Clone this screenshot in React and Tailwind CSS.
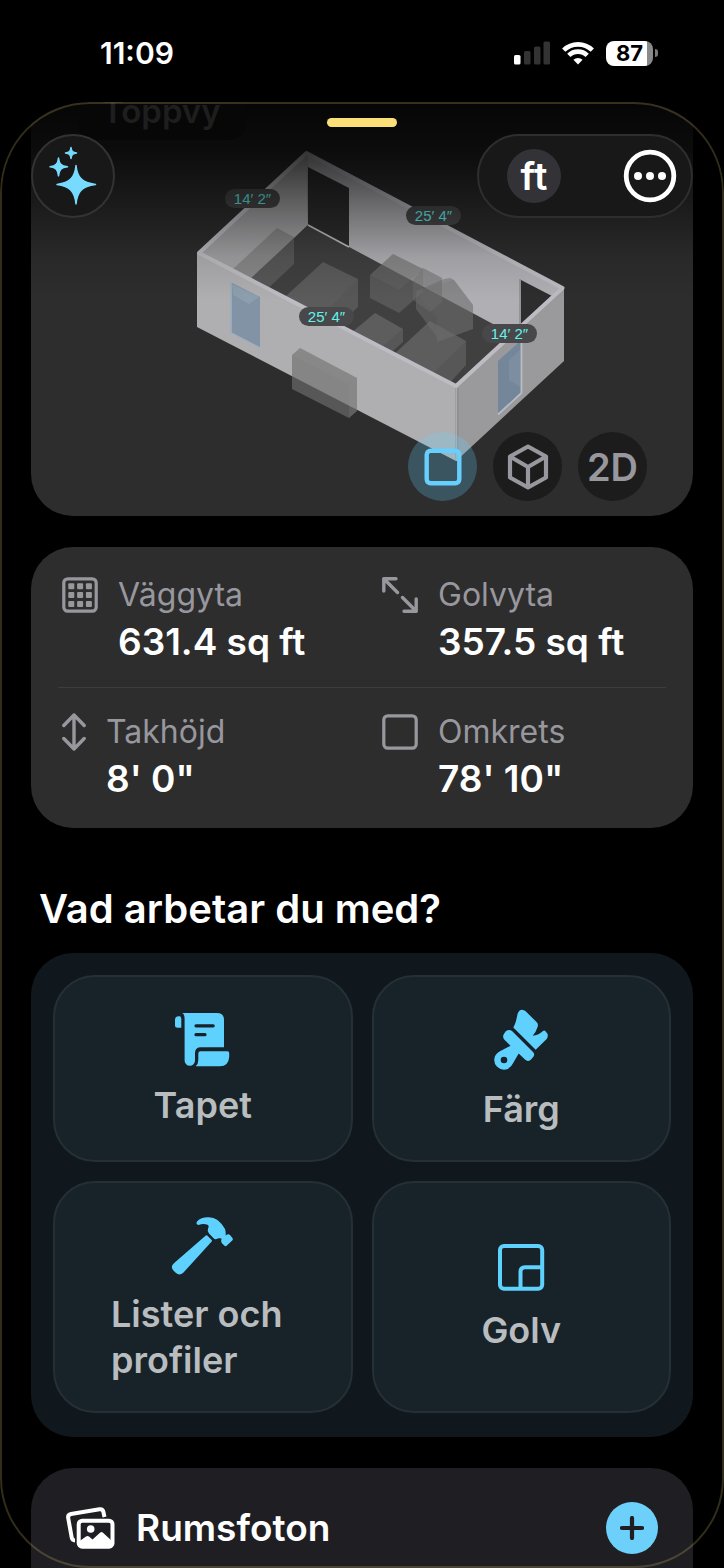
// File: src/App.jsx
// Room detail sheet: 3D preview, measurements, materials and photos

import React, { useState } from 'react';

const StatusBar = () => (
  <header className="flex h-[102px] shrink-0 items-center justify-between pt-1.5 pr-[66px] pb-0.5 pl-[100px]">
    <time className="text-[30px] leading-10 font-semibold">11:09</time>
    <div className="flex items-center gap-3">
      <svg viewBox="0 0 36 24" className="h-6 w-9">
        <rect x="0" y="14" width="6.5" height="9.5" rx="1.6" fill="#fff" />
        <rect x="10" y="10" width="6.5" height="13.5" rx="1.6" fill="#333" />
        <rect x="20" y="5.5" width="6.5" height="18" rx="1.6" fill="#333" />
        <rect x="29.5" y="0.5" width="6.5" height="23" rx="1.6" fill="#333" />
      </svg>
      <svg viewBox="0 0 32 24" className="h-6 w-8" fill="none" stroke="#fff" strokeWidth="4.6">
        <path d="M1.7 9.2A20.4 20.4 0 0 1 30.3 9.2" />
        <path d="M6.8 14.4A13 13 0 0 1 25.2 14.4" />
        <path d="M11.4 18.8A6.5 6.5 0 0 1 20.6 18.8L16 23.5Z" fill="#fff" stroke="none" />
      </svg>
      <div className="flex items-center gap-0.5">
        <div className="flex h-[25px] w-[47px] items-center justify-center rounded-lg bg-linear-to-r from-white from-87% to-[#8a8a8a] to-87% text-[22px] leading-6 font-bold text-black">
          87
        </div>
        <div className="h-2 w-[3px] rounded-r-full bg-[#7a7a7a]" />
      </div>
    </div>
  </header>
);

// Wall lengths shown on top of the model
const dimensions = [
  { text: '14′ 2″', x: 225, y: 189 },
  { text: '25′ 4″', x: 406, y: 206 },
  { text: '25′ 4″', x: 299, y: 307 },
  { text: '14′ 2″', x: 482, y: 324 },
];

const RoomModel = () => (
  <svg viewBox="31 102 662 414" className="block w-full">
    <defs>
      <linearGradient id="fade" x1="0" y1="102" x2="0" y2="300" gradientUnits="userSpaceOnUse">
        <stop offset="0" stopColor="#000" stopOpacity="0.88" />
        <stop offset="0.24" stopColor="#000" stopOpacity="0.74" />
        <stop offset="0.5" stopColor="#000" stopOpacity="0.42" />
        <stop offset="0.78" stopColor="#000" stopOpacity="0.1" />
        <stop offset="1" stopColor="#000" stopOpacity="0" />
      </linearGradient>
    </defs>

    {/* Inner walls and floor */}
    <path d="M307 152L199 253L251 280L308 225Z" fill="#a2a2a4" />
    <path d="M307 152L563 288L504 338L308 225Z" fill="#b0b0b4" />
    <path d="M308 225L250 279L456 388L510 336L493 324Z" fill="#404040" />

    {/* Doors */}
    <path d="M308 167L349 188V247L308 225Z" fill="#2d2d2d" />
    <path d="M308 225L349 247" stroke="#c2c1c6" strokeWidth="1.6" />
    <path d="M521 280L552 296L521 325Z" fill="#2d2d2d" />
    <path d="M520 279V325" stroke="#8f8f92" strokeWidth="1.6" />

    {/* Furniture */}
    <g fill="#6e6e6e" fillOpacity="0.5">
      <path d="M277 228L294 237V264L262 294L232 270Z" />
      <path d="M323 262L358 279V307L330 334L285 297Z" />
      <path d="M323 262L358 279L322 316L285 297Z" fillOpacity="0.2" />
      <path d="M393 254L423 269V292L399 313L370 298V275Z" />
      <path d="M393 254L423 269L399 290L370 275Z" fillOpacity="0.25" />
      <path d="M423 268L442 278V302L430 312L413 300V280Z" fillOpacity="0.4" />
      <path d="M423 268V286L442 296V278Z" fillOpacity="0.25" />
      <path d="M416 291L444 279L450 278L454 280L473 305V329L437 342V337L416 309Z" />
      <path d="M416 291L437 318V342L473 329V305L454 280Z" fillOpacity="0.2" />
      <path d="M375 313L403 329V342L383 360L351 333Z" />
      <path d="M375 313L403 329L378 350L351 333Z" fillOpacity="0.25" />
      <path d="M430 321L466 341V365L447 386L392 356Z" />
      <path d="M430 321L466 341L433 373L396 353Z" fillOpacity="0.3" />
    </g>

    {/* Outer walls */}
    <path d="M197 252L456 387V461L197 327Z" fill="#afafb1" />
    <path d="M456 387L564 288V361L456 461Z" fill="#9a9a9c" />
    <path d="M457 388V461" stroke="#8b8b8d" strokeWidth="3" />
    <path d="M456.5 388V461" stroke="#adadaf" strokeWidth="1.2" />
    <path d="M306.5 153L562.5 288L456 386L199 253Z" fill="none" stroke="#bdbcc2" strokeWidth="4" strokeLinejoin="round" />

    {/* Windows */}
    <path d="M230.5 282L260 297V348L230.5 333Z" fill="#8193a5" />
    <path d="M232 284L259 297L249 304L233 295Z" fill="#8d9fae" />
    <path d="M231 282V333L260 348" fill="none" stroke="#a2afbf" strokeWidth="1.6" />
    <path d="M498 361L520.5 341V393L498 415Z" fill="#74869a" />
    <path d="M509 360L520 350V387L509 380Z" fill="#7c8ea0" />
    <path d="M521.5 341V393L498 414.5" fill="none" stroke="#b7bbc4" strokeWidth="1.8" />

    {/* Cabinet outside of the room */}
    <path d="M300 348L357 378V411L349 418L292 389V355Z" fill="#6e6e6e" fillOpacity="0.65" />
    <path d="M300 348L357 378L349 385L292 355Z" fill="#999" fillOpacity="0.14" />
    <path d="M349 385L357 378V411L349 418Z" fill="#999" fillOpacity="0.14" />

    {dimensions.map((item) => (
      <g key={`${item.x}-${item.y}`}>
        <rect x={item.x} y={item.y} width="55" height="19" rx="9.5" fill="#48484a" />
        <text
          x={item.x + 27.5}
          y={item.y + 15}
          textAnchor="middle"
          fill="#64f1ec"
          className="font-['Liberation_Sans',sans-serif] text-[15px]"
        >
          {item.text}
        </text>
      </g>
    ))}
    <rect x="31" y="102" width="662" height="200" fill="url(#fade)" />
  </svg>
);

const SparklesIcon = () => (
  <svg viewBox="0 0 48 60" className="h-[60px] w-12" fill="#76dbff" stroke="#76dbff" strokeLinejoin="round" strokeWidth="1.5">
    <path d="M27 19.500C28.200 31.500 33 36.800 46.500 38.500C33 40.200 28.200 45.500 27 58C25.800 45.500 21 40.200 8 38.500C21 36.800 25.800 31.500 27 19.500Z" />
    <path d="M9.500 12C10.200 18 12 20 18.500 20.800C12 21.600 10.200 23.800 9.500 29.800C8.800 23.800 7 21.600 1 20.800C7 20 8.800 18 9.500 12Z" />
    <path d="M22 1.500C22.500 5.300 23.700 6.500 27.500 7C23.700 7.500 22.500 8.700 22 12.500C21.500 8.700 20.300 7.500 16.500 7C20.300 6.500 21.500 5.300 22 1.500Z" />
  </svg>
);

const viewModes = [
  {
    id: 'top',
    label: 'Toppvy',
    content: (
      <svg viewBox="0 0 38 38" className="size-[38px]" fill="none" stroke="currentColor" strokeWidth="4.4">
        <rect x="2.7" y="2.7" width="32.600" height="32.600" rx="4" />
      </svg>
    ),
  },
  {
    id: '3d',
    label: '3D',
    content: (
      <svg viewBox="0 0 42 46" className="h-[46px] w-[42px]" fill="none" stroke="currentColor" strokeWidth="4.2" strokeLinejoin="round">
        <path d="M21 2.500L39 12.500V33.500L21 43.500L3 33.500V12.500Z" />
        <path d="M3 12.500L21 23L39 12.500M21 23V43.500" />
      </svg>
    ),
  },
  { id: '2d', label: '2D', content: <span className="text-[38px] leading-10 font-semibold">2D</span> },
];

const PreviewCard = () => {
  const [mode, setMode] = useState('top');

  return (
    <section className="relative overflow-hidden rounded-b-[42px] bg-[#2d2d2d]">
      <RoomModel />

      <div className="absolute -top-3.5 left-[47px] rounded-2xl bg-[#070707] px-6 pb-1.5 text-[33px] leading-[46px] font-semibold text-[#1e1e1e]">
        Toppvy
      </div>

      <div className="absolute inset-x-0 top-8 flex items-center justify-between">
        <button aria-label="AI" className="flex size-[84px] items-center justify-center rounded-full border-2 border-[#333] bg-[#181818]">
          <SparklesIcon />
        </button>
        <div className="flex h-[84px] items-center gap-[62px] rounded-full border-2 border-[#2e2e2e] bg-[#181818] pr-3.5 pl-7">
          <button className="flex size-[54px] items-center justify-center rounded-full bg-[#333237] text-[38px] leading-10 font-semibold">
            ft
          </button>
          <button aria-label="Mer">
            <svg viewBox="0 0 54 54" className="size-[54px]" fill="#fff">
              <circle cx="27" cy="27" r="23.8" fill="none" stroke="#fff" strokeWidth="4.8" />
              <circle cx="15" cy="27" r="4" />
              <circle cx="27" cy="27" r="4" />
              <circle cx="39" cy="27" r="4" />
            </svg>
          </button>
        </div>
      </div>

      <div className="absolute right-[46px] bottom-[15px] flex gap-4">
        {viewModes.map((item) => (
          <button
            key={item.id}
            aria-label={item.label}
            onClick={() => setMode(item.id)}
            className={`flex size-[69px] items-center justify-center rounded-full ${
              mode === item.id ? 'bg-[#67cefb]/25 text-[#67cffd]' : 'bg-[#1c1c1c] text-[#98979e]'
            }`}
          >
            {item.content}
          </button>
        ))}
      </div>
    </section>
  );
};

const gridCells = [6.3, 15.1, 23.9];

const GridIcon = () => (
  <svg viewBox="0 0 36 36" className="size-9 shrink-0" fill="none" stroke="currentColor" strokeWidth="3.2">
    <rect x="1.8" y="1.8" width="32.4" height="32.4" rx="4" />
    {gridCells.map((y) =>
      gridCells.map((x) => (
        <rect key={`${x}-${y}`} x={x} y={y} width="6" height="6" rx="1" fill="currentColor" stroke="none" />
      ))
    )}
  </svg>
);

const DiagonalIcon = () => (
  <svg viewBox="0 0 36 36" className="size-9 shrink-0" fill="none" stroke="currentColor" strokeWidth="3.4" strokeLinecap="round" strokeLinejoin="round">
    <path d="M14 1.8H1.8V14M1.8 1.8L15.500 15.500" />
    <path d="M22 34.2H34.2V22M34.2 34.2L20.500 20.500" />
  </svg>
);

const HeightIcon = () => (
  <svg viewBox="0 0 24 38" className="h-[38px] w-6 shrink-0" fill="none" stroke="currentColor" strokeWidth="3.4" strokeLinecap="round" strokeLinejoin="round">
    <path d="M12 2V36M1.8 12.500L12 2L22.200 12.500M1.8 25.500L12 36L22.200 25.500" />
  </svg>
);

const SquareIcon = () => (
  <svg viewBox="0 0 36 36" className="size-9 shrink-0" fill="none" stroke="currentColor" strokeWidth="3.2">
    <rect x="1.8" y="1.8" width="32.4" height="32.4" rx="4" />
  </svg>
);

const Stat = ({ icon, label, value }) => (
  <div className="flex gap-5 text-[#98979e]">
    <div className="flex h-[46px] items-center">{icon}</div>
    <dl>
      <dt className="text-[32px] leading-[46px]">{label}</dt>
      <dd className="text-[37px] leading-[48px] font-semibold whitespace-nowrap text-white">{value}</dd>
    </dl>
  </div>
);

const StatsCard = () => (
  <section className="mt-[31px] rounded-[42px] bg-[#2d2d2d] px-[27px] py-[25px]">
    <div className="grid grid-cols-2 gap-x-9 pl-1">
      <Stat icon={<GridIcon />} label="Väggyta" value="631.4 sq ft" />
      <Stat icon={<DiagonalIcon />} label="Golvyta" value="357.5 sq ft" />
    </div>
    <hr className="my-[21px] border-[#3d3d3f]" />
    <div className="grid grid-cols-2 gap-x-9 pl-1">
      <Stat icon={<HeightIcon />} label="Takhöjd" value={'8\' 0"'} />
      <Stat icon={<SquareIcon />} label="Omkrets" value={'78\' 10"'} />
    </div>
  </section>
);

const WallpaperIcon = () => (
  <svg viewBox="176 1010 55 57" className="h-[57px] w-[55px] overflow-visible" fill="currentColor">
    <path d="M183.3 1014H218Q225 1014 225 1021V1048.3H202Q196 1048.3 196 1054V1061.5A5.2 5.2 0 0 1 185.6 1061.5V1020Q185.6 1015 183.3 1014Z" />
    <path d="M201.5 1052.3H228.5Q230.3 1052.3 230.2 1054V1058Q229.5 1067.3 221 1067.3H196.7Q199.3 1065 199.3 1061V1054.5Q199.3 1052.3 201.5 1052.3Z" />
    <path d="M179.5 1017.3H181Q182.3 1018.3 182.3 1020V1028.7H178.5Q176 1028.7 176 1026.2V1020.8Q176 1017.3 179.5 1017.3Z" />
    <path d="M197 1026.8H214.2M197 1035.7H206" stroke="#172329" strokeWidth="3.2" strokeLinecap="round" />
  </svg>
);

const PaintIcon = () => (
  <svg viewBox="493 1006 56 65" className="h-[65px] w-14 overflow-visible" fill="currentColor">
    <path d="M517.5 1015Q519 1010.7 522 1010.7Q524 1010.7 525.7 1012.3L536.8 1023.3Q538.5 1025 537.6 1028Q536 1033 532.7 1036.7Q538 1036.5 543 1032Q544.5 1031 545.7 1032.5L547.3 1034.5Q548.6 1037 546.7 1040L535.7 1050.7L513.3 1028.5Q516 1024 517.5 1015Z" />
    <path
      fillRule="evenodd"
      d="M505.8 1032.3Q509 1029.7 512 1032L533 1053Q535.5 1055.6 532.8 1058.6L530.5 1061Q527.5 1063 525 1060.5L518.7 1054.5Q516 1059 513.5 1063.5Q510 1070.7 504 1070.7A9.8 9.8 0 0 1 494.2 1061Q494.2 1055.5 499.5 1052.5Q505 1049.5 510.5 1046.7L504.2 1040.5Q502 1037.5 504.2 1034.5ZM504 1057.7A3.3 3.3 0 1 0 504 1064.3A3.3 3.3 0 1 0 504 1057.7Z"
    />
  </svg>
);

const HammerIcon = () => (
  <svg viewBox="172 1212 63 64" className="h-16 w-[63px] overflow-visible" fill="currentColor">
    <path d="M198 1222.5Q202 1218.3 208.7 1218.3Q214.5 1218 218.5 1221Q223.5 1225 226 1230Q227 1233 226.7 1236.5Q229 1234.5 231 1236L233.6 1239.2Q234.3 1240.2 233.5 1241.2L227.3 1247Q226.3 1247.5 225.5 1246.8L222.7 1244Q221.7 1242 222.5 1239.5Q219.5 1238.7 217.5 1240Q216 1240.8 214.8 1239.6L210 1234.5Q208 1232 209 1229.5Q210.5 1227 208.5 1225.8Q204.5 1224 199.5 1226Q196.5 1225.5 198 1222.5Z" />
    <path d="M206.8 1236.5Q207.5 1235.8 208.2 1236.5L212.7 1241Q213.2 1241.7 212.7 1242.4L184.5 1273.5Q180.5 1277.5 176.7 1273.8L174.2 1271.2Q171 1267.500 175.2 1264Z" />
  </svg>
);

const FloorIcon = () => (
  <svg viewBox="497 1242 48 50" className="h-[50px] w-12" fill="none" stroke="currentColor" strokeWidth="4">
    <rect x="500" y="1247" width="42.2" height="42.7" rx="4" />
    <path d="M542 1268.2H525Q520.5 1268.2 520.5 1272.7V1290" />
  </svg>
);

const materials = [
  { name: 'Tapet', icon: <WallpaperIcon /> },
  { name: 'Färg', icon: <PaintIcon /> },
  { name: 'Lister och profiler', icon: <HammerIcon /> },
  { name: 'Golv', icon: <FloorIcon /> },
];

const MaterialsSection = () => (
  <section>
    <h2 className="mt-[57px] mb-5 pl-2 text-[40px] leading-[48px] font-semibold">Vad arbetar du med?</h2>
    <div className="grid grid-cols-2 gap-[19px] rounded-[42px] bg-[#10181e] px-[22px] pt-[22px] pb-6">
      {materials.map((item) => (
        <button
          key={item.name}
          className="flex flex-col items-center justify-center gap-4 rounded-[42px] border-2 border-[#243035] bg-[#172329] px-14 py-7 text-[#5fd1fe]"
        >
          {item.icon}
          <span className="text-left text-[36px] leading-[46px] font-semibold text-[#b9bdbf]">{item.name}</span>
        </button>
      ))}
    </div>
  </section>
);

const PhotosIcon = () => (
  <svg viewBox="67 1507 50 43" className="h-[43px] w-[50px]" fill="none" stroke="#fff" strokeWidth="4" strokeLinejoin="round">
    <path d="M105.5 1517L104.3 1511.5Q103.5 1508.8 100.5 1509.3L72 1514Q68.6 1514.8 69.2 1518L72.7 1537.5Q73.3 1540.5 76 1540.5" strokeLinecap="butt" />
    <rect x="79.7" y="1520.7" width="33.8" height="26" rx="3.5" />
    <circle cx="91.7" cy="1529" r="3.8" fill="#fff" stroke="none" />
    <path d="M80 1541.5L87 1536.5Q88.5 1535.5 90 1536.5L93.5 1539.5L101 1532.7Q102.5 1531.5 104 1532.7L113.5 1541.5V1547H80Z" fill="#fff" stroke="none" />
  </svg>
);

const PhotosCard = () => (
  <section className="mt-[31px] h-60 rounded-t-[42px] bg-[#1f1e23] px-[35px] pt-[34px]">
    <div className="flex items-center gap-5">
      <PhotosIcon />
      <h3 className="flex-1 text-[37px] leading-[48px] font-semibold">Rumsfoton</h3>
      <button aria-label="Lägg till" className="flex size-[52px] items-center justify-center rounded-full bg-[#6dd0fa]">
        <svg viewBox="0 0 24 24" className="size-6" stroke="#1f1e23" strokeWidth="4.2" strokeLinecap="round">
          <path d="M12 2V22M2 12H22" />
        </svg>
      </button>
    </div>
  </section>
);

const App = () => {
  return (
    <div className="flex h-screen flex-col overflow-hidden bg-black font-['Inter','Liberation_Sans',sans-serif] text-white">
      <StatusBar />
      <main className="relative min-h-0 flex-1 overflow-hidden rounded-t-[90px] px-[31px]">
        <PreviewCard />
        <StatsCard />
        <MaterialsSection />
        <PhotosCard />

        {/* Grabber and the thin outline of the sheet */}
        <div className="absolute top-4 left-1/2 h-[9px] w-[70px] -translate-x-1/2 rounded-full bg-[#fbe077]" />
        <div className="pointer-events-none absolute inset-0 rounded-[90px] border-2 border-[#fbe077]/20" />
      </main>
    </div>
  );
};

export default App;
